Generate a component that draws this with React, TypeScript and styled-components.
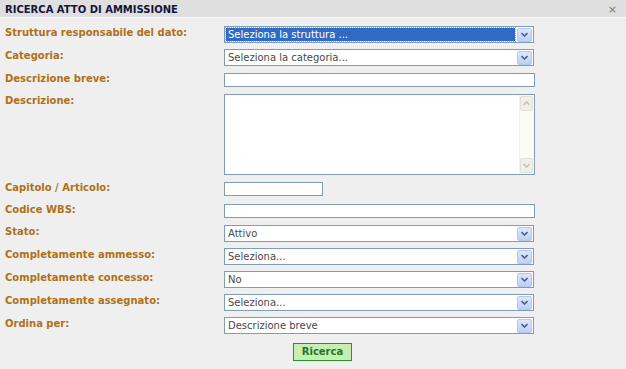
import React from 'react';
import styled, { createGlobalStyle } from 'styled-components';

const Global = createGlobalStyle`
  html, body { margin: 0; padding: 0; background: #efefef; }
  body { font-family: "DejaVu Sans", Verdana, sans-serif; font-size: 10px; }
  * { box-sizing: border-box; }
`;

const Dialog = styled.div`
  width: 626px;
  height: 369px;
  background: #efefef;
  display: flex;
  flex-direction: column;
  overflow: hidden;
`;

const Header = styled.div`
  height: 18px;
  background: #dfdfdf;
  border-bottom: 1px solid #f8f8f8;
  display: flex;
  align-items: center;
  justify-content: space-between;
  padding: 1px 9px 0 5px;
`;

const Title = styled.span`
  font-weight: bold;
  font-size: 10px;
  color: #15153a;
`;

const Close = styled.span`
  color: #7a7a7a;
  font-size: 11px;
  font-family: "DejaVu Sans", sans-serif;
`;

const Form = styled.div`
  display: grid;
  grid-template-columns: 219px 320px;
  row-gap: 6px;
  padding: 8px 0 0 5px;
  align-items: start;
`;

const Label = styled.div`
  font-weight: bold;
  font-size: 10px;
  line-height: 13px;
  color: #b07019;
  padding-top: 0;
  white-space: nowrap;
`;

const SelectBox = styled.div`
  width: 310px;
  height: 17px;
  border: 1px solid #7f9db9;
  background: #fff;
  display: flex;
  align-items: center;
  padding: 0 1px;
`;

const SelectValue = styled.div<{ $focused?: boolean }>`
  flex: 1;
  height: 13px;
  margin-right: 2px;
  line-height: 13px;
  font-size: 10px;
  padding-left: 2px;
  color: ${(p) => (p.$focused ? '#ffffff' : '#4a4a4a')};
  background: ${(p) => (p.$focused ? '#316ac5' : 'transparent')};
  outline: ${(p) => (p.$focused ? '1px dotted #e0b050' : 'none')};
  white-space: nowrap;
  overflow: hidden;
`;

const ArrowBtn = styled.div`
  width: 15px;
  height: 14px;
  border: 1px solid #b4c8f2;
  border-radius: 2px;
  background: linear-gradient(#dde7fc, #bccff7);
  display: flex;
  align-items: center;
  justify-content: center;
`;

const TextInput = styled.div<{ $w: number }>`
  width: ${(p) => p.$w}px;
  height: 14px;
  margin: 1px 0;
  border: 1px solid #7f9db9;
  background: #fff;
`;

const TextArea = styled.div`
  width: 311px;
  height: 81px;
  border: 1px solid #7f9db9;
  background: #fff;
  display: flex;
  justify-content: flex-end;
`;

const ScrollTrack = styled.div`
  width: 15px;
  height: 100%;
  background: #fcfcf5;
  border-left: 1px solid #f3f3ea;
  display: flex;
  flex-direction: column;
  justify-content: space-between;
  padding: 1px 1px 1px 0;
`;

const ScrollBtn = styled.div`
  width: 13px;
  height: 15px;
  background: #f1f0e8;
  border: 1px solid #e2e0d2;
  border-radius: 2px;
  display: flex;
  align-items: center;
  justify-content: center;
`;

const ButtonRow = styled.div`
  grid-column: 2;
  margin-top: 3px;
  padding-left: 69px;
`;

const SearchButton = styled.button`
  width: 59px;
  height: 18px;
  background: #c8edb5;
  border: 1px solid #1f9a1f;
  color: #1c7a1c;
  font-family: "DejaVu Sans", Verdana, sans-serif;
  font-weight: bold;
  font-size: 10px;
  padding: 0;
  line-height: 16px;
`;

const Chevron = ({ color = '#4d6185', up = false }: { color?: string; up?: boolean }) => (
  <svg width="7" height="5" viewBox="0 0 7 5">
    <path
      d={up ? 'M0.5 4 L3.5 1 L6.5 4' : 'M0.5 1 L3.5 4 L6.5 1'}
      fill="none"
      stroke={color}
      strokeWidth="1.6"
    />
  </svg>
);

const Select = ({ value, focused }: { value: string; focused?: boolean }) => (
  <SelectBox>
    <SelectValue $focused={focused}>{value}</SelectValue>
    <ArrowBtn>
      <Chevron />
    </ArrowBtn>
  </SelectBox>
);

export default function App() {
  return (
    <>
      <Global />
      <Dialog>
        <Header>
          <Title>RICERCA ATTO DI AMMISSIONE</Title>
          <Close>×</Close>
        </Header>
        <Form>
          <Label>Struttura responsabile del dato:</Label>
          <Select value="Seleziona la struttura ..." focused />

          <Label>Categoria:</Label>
          <Select value="Seleziona la categoria..." />

          <Label>Descrizione breve:</Label>
          <TextInput $w={311} />

          <Label>Descrizione:</Label>
          <TextArea>
            <ScrollTrack>
              <ScrollBtn>
                <Chevron color="#c4c3b8" up />
              </ScrollBtn>
              <ScrollBtn>
                <Chevron color="#c4c3b8" />
              </ScrollBtn>
            </ScrollTrack>
          </TextArea>

          <Label>Capitolo / Articolo:</Label>
          <TextInput $w={99} />

          <Label>Codice WBS:</Label>
          <TextInput $w={311} />

          <Label>Stato:</Label>
          <Select value="Attivo" />

          <Label>Completamente ammesso:</Label>
          <Select value="Seleziona..." />

          <Label>Completamente concesso:</Label>
          <Select value="No" />

          <Label>Completamente assegnato:</Label>
          <Select value="Seleziona..." />

          <Label>Ordina per:</Label>
          <Select value="Descrizione breve" />

          <ButtonRow>
            <SearchButton>Ricerca</SearchButton>
          </ButtonRow>
        </Form>
      </Dialog>
    </>
  );
}
